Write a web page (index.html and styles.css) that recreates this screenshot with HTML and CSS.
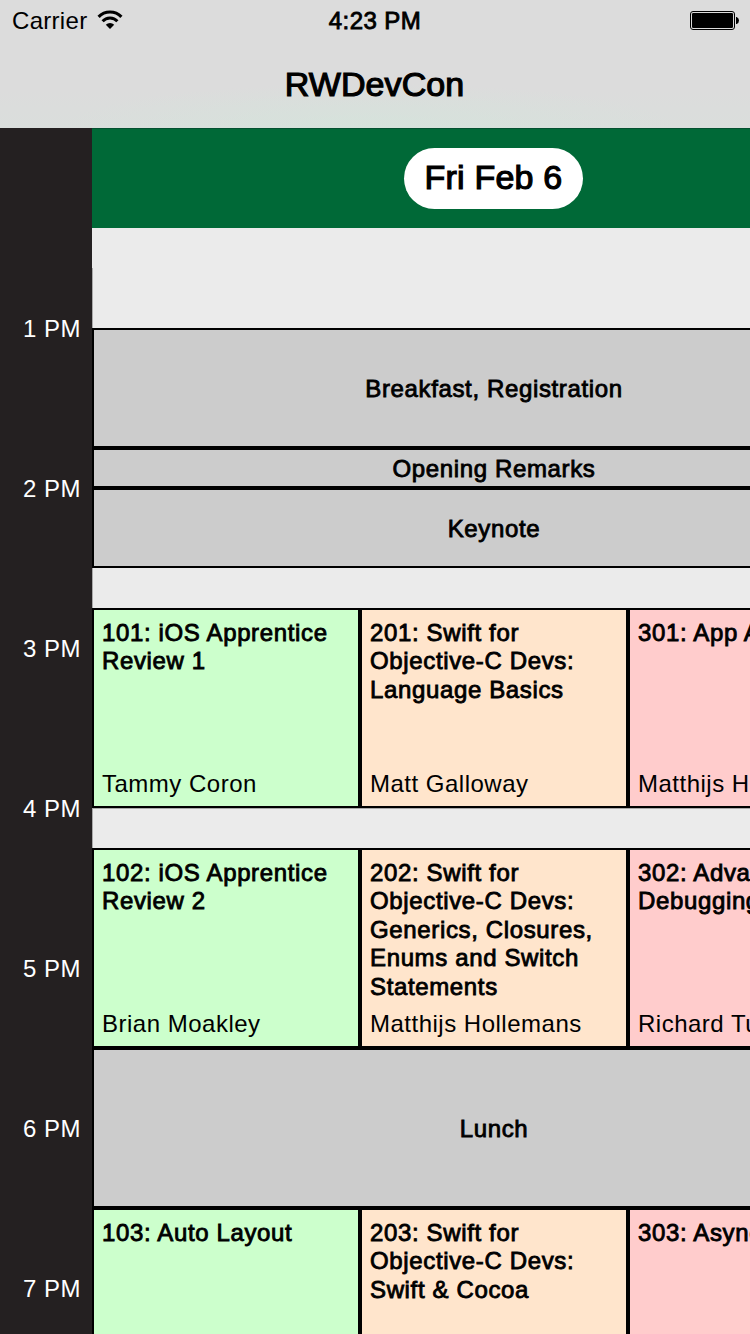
FILE: index.html
```html
<!DOCTYPE html>
<html lang="en">
<head>
<meta charset="utf-8">
<title>RWDevCon</title>
<link rel="stylesheet" href="styles.css">
</head>
<body>
<header class="navbar">
  <div class="status">
    <div class="carrier"><span>Carrier</span>
      <svg class="wifi" width="26" height="20" viewBox="0 0 26 20">
        <path d="M1.6 6.9A15.8 15.8 0 0 1 24.4 6.9" fill="none" stroke="#000" stroke-width="3.1"/>
        <path d="M5.6 11.3A9.9 9.9 0 0 1 20.4 11.3" fill="none" stroke="#000" stroke-width="2.9"/>
        <path d="M8.8 14.8A6 6 0 0 1 17.2 14.8L13 19Z"/>
      </svg>
    </div>
    <div class="clock medium">4:23 PM</div>
    <svg class="battery" width="50" height="20" viewBox="0 0 50 20">
      <rect x=".5" y=".5" width="44" height="18" rx="2.5" fill="none" stroke="#000"/>
      <rect x="2" y="2" width="41" height="15" rx="1.3"/>
      <path d="M46 6h.7Q49 7 49 9.5T46.7 13H46Z"/>
    </svg>
  </div>
  <h1 class="title medium">RWDevCon</h1>
</header>
<main class="schedule">
  <aside class="hours">
    <div class="hour">1 PM</div>
    <div class="hour">2 PM</div>
    <div class="hour">3 PM</div>
    <div class="hour">4 PM</div>
    <div class="hour">5 PM</div>
    <div class="hour">6 PM</div>
    <div class="hour">7 PM</div>
  </aside>
  <div class="board">
    <div class="day"><div class="pill medium">Fri Feb 6</div></div>
    <div class="gap lead"></div>
    <div class="common breakfast medium">Breakfast, Registration</div>
    <div class="common opening medium">Opening Remarks</div>
    <div class="common keynote medium">Keynote</div>
    <div class="gap"></div>
    <div class="tracks">
      <div class="session green"><h2 class="medium">101: iOS Apprentice<br>Review 1</h2><p>Tammy Coron</p></div>
      <div class="session orange"><h2 class="medium">201: Swift for<br>Objective-C Devs:<br>Language Basics</h2><p>Matt Galloway</p></div>
      <div class="session pink"><h2 class="medium">301: App A</h2><p>Matthijs H</p></div>
    </div>
    <div class="gap ruled"></div>
    <div class="tracks">
      <div class="session green"><h2 class="medium">102: iOS Apprentice<br>Review 2</h2><p>Brian Moakley</p></div>
      <div class="session orange"><h2 class="medium">202: Swift for<br>Objective-C Devs:<br>Generics, Closures,<br>Enums and Switch<br>Statements</h2><p>Matthijs Hollemans</p></div>
      <div class="session pink"><h2 class="medium">302: Adva<br>Debugging</h2><p>Richard Tu</p></div>
    </div>
    <div class="common lunch medium">Lunch</div>
    <div class="tracks">
      <div class="session green"><h2 class="medium">103: Auto Layout</h2></div>
      <div class="session orange"><h2 class="medium">203: Swift for<br>Objective-C Devs:<br>Swift &amp; Cocoa</h2></div>
      <div class="session pink"><h2 class="medium">303: Async</h2></div>
    </div>
  </div>
</main>
</body>
</html>
```

FILE: styles.css
```css
* { box-sizing: border-box; }
html, body { margin: 0; width: 750px; height: 1334px; overflow: hidden; }
body {
  display: flex;
  flex-direction: column;
  font-family: "Liberation Sans", Arial, sans-serif;
  font-size: 24px;
  letter-spacing: .5px;
  color: #000;
  background: #ebebeb;
}
h1, h2, p { margin: 0; font-weight: 400; }
.medium { -webkit-text-stroke: .85px currentColor; letter-spacing: .64px; }

.navbar {
  flex: none;
  height: 128px;
  background:
    radial-gradient(ellipse 310px 45px at 370px 128px, rgba(212, 228, 219, .75), transparent),
    linear-gradient(#dcdcdc 70%, #dadedc);
}
.status {
  display: grid;
  grid-template-columns: 1fr auto 1fr;
  height: 41px;
  padding: 0 10px 0 12px;
  align-items: center;
}
.carrier { display: flex; align-items: center; gap: 10px; letter-spacing: .3px; }
.wifi { margin-top: -1px; }
.clock { letter-spacing: .45px; margin-right: 2px; }
.battery { justify-self: end; margin-top: 1px; }
.title {
  line-height: 40px;
  margin-top: 23px;
  padding-right: 1px;
  font-size: 34px;
  text-align: center;
  letter-spacing: .1px;
  -webkit-text-stroke-width: 1.2px;
}

.schedule { flex: 1; min-height: 0; display: flex; overflow: hidden; }
.hours {
  flex: none;
  width: 92px;
  padding-top: 120px;
  background: #242021;
}
.hour {
  display: flex;
  align-items: center;
  justify-content: flex-end;
  height: 160px;
  padding: 2px 11px 0 0;
  color: #fff;
}
.board { flex: none; width: 804px; }
.day {
  display: flex;
  align-items: center;
  justify-content: center;
  height: 100px;
  padding-right: 1px;
  border-top: 1px solid #045030;
  background: #006937;
}
.pill {
  width: 179px;
  height: 61px;
  border-radius: 31px;
  background: #fff;
  font-size: 34px;
  line-height: 59px;
  text-align: center;
  letter-spacing: .2px;
  -webkit-text-stroke-width: 1.2px;
}
.gap { height: 40px; border-left: 1px solid #a9a9a9; }
.gap.ruled { border-top: 1px solid #a9a9a9; }
.lead {
  height: 100px;
  border-left: 0;
  background: linear-gradient(#a9a9a9, #a9a9a9) 0 40px / 1px 60px no-repeat;
}
.common {
  display: flex;
  align-items: center;
  justify-content: center;
  padding-top: 2px;
  border: 2px solid #000;
  background: #ccc;
}
.breakfast { height: 120px; }
.opening { height: 40px; }
.keynote { height: 80px; }
.lunch { height: 160px; }
.tracks { display: grid; grid-template-columns: repeat(3, 268px); height: 200px; }
.session {
  display: flex;
  flex-direction: column;
  justify-content: space-between;
  padding: 8.7px 8px 8px;
  border: 2px solid #000;
  line-height: 28.5px;
  white-space: nowrap;
}
.session h2 { font-size: 24px; }
.green { background: #cfc; }
.orange { background: #ffe5cc; }
.pink { background: #fcc; }
```
